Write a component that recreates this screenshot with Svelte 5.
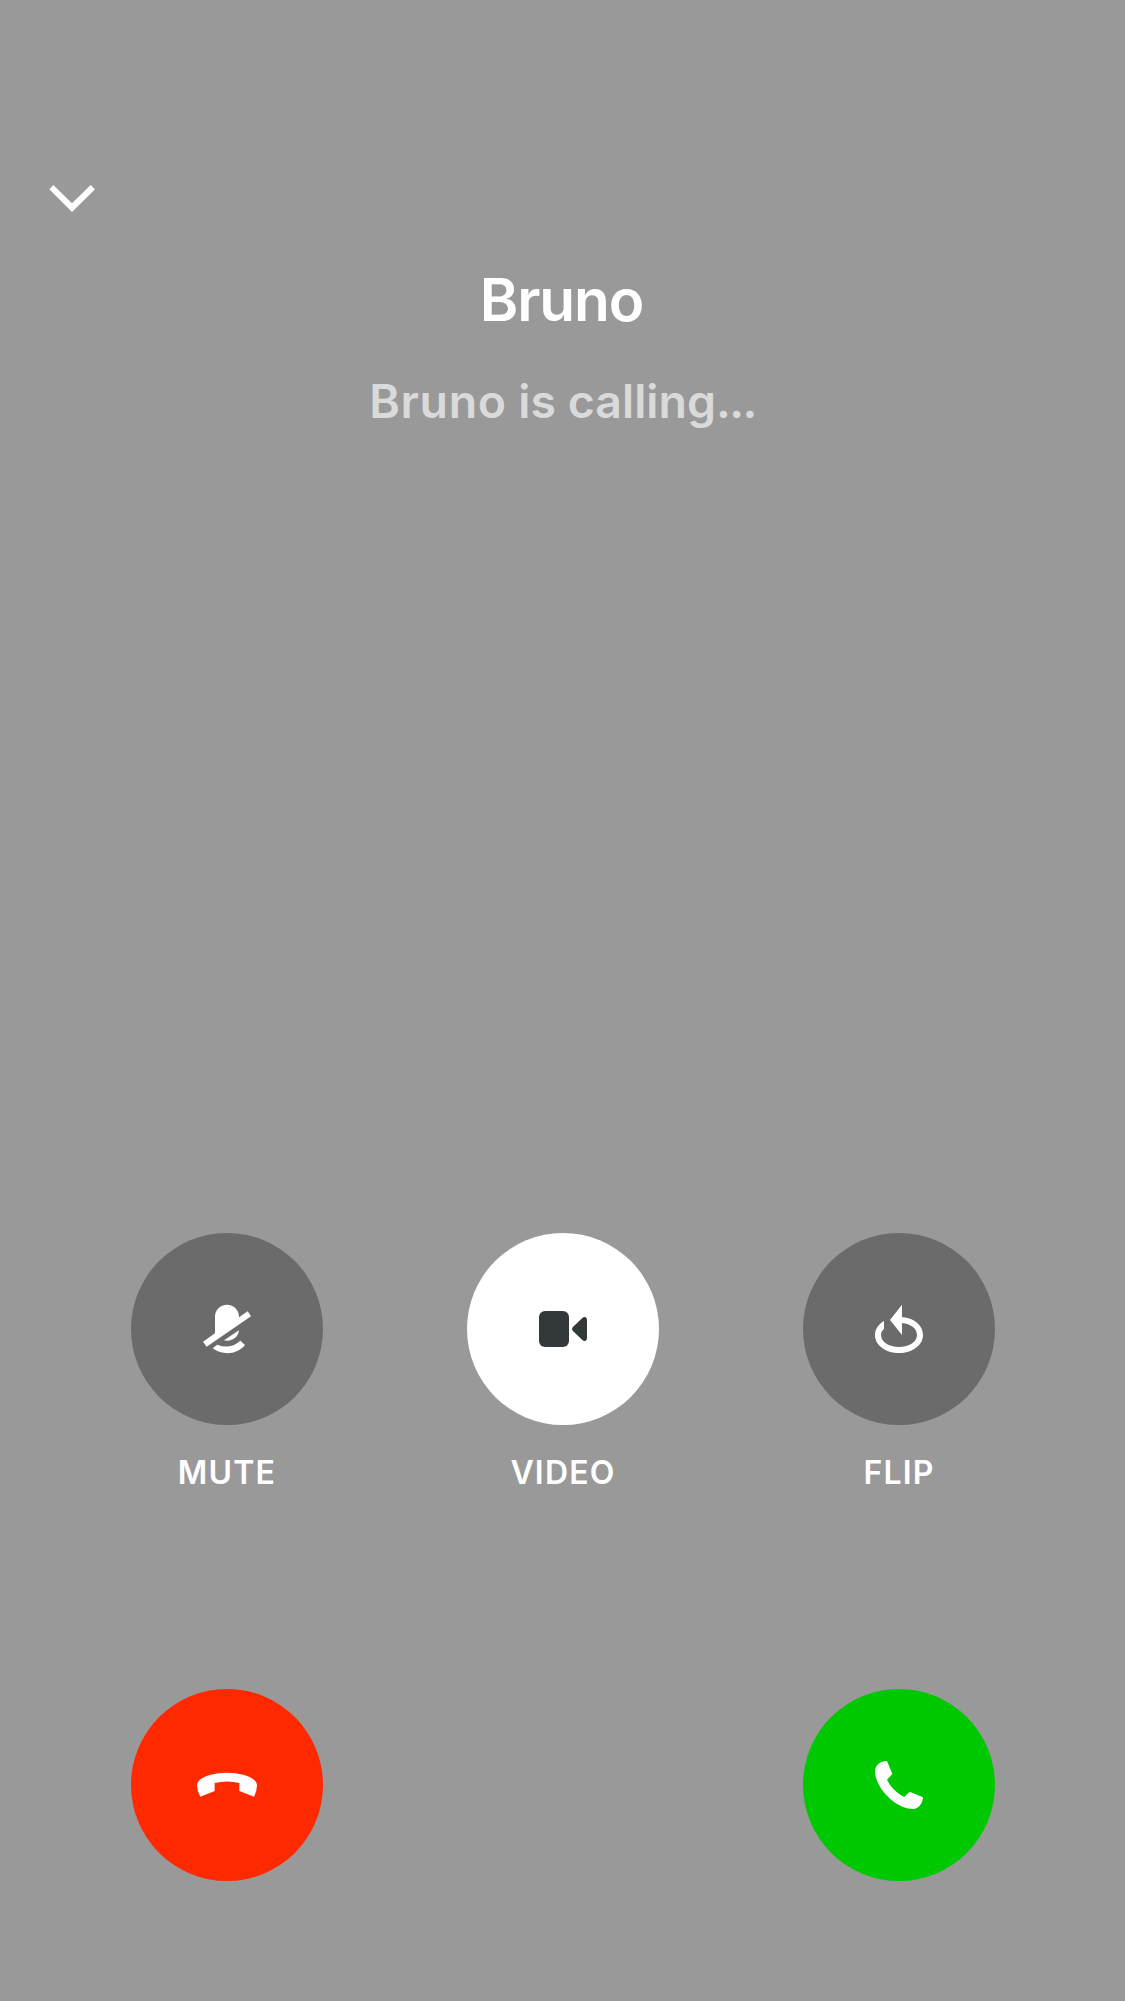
<script>
  const controls = [
    { id: 'mute', label: 'MUTE' },
    { id: 'video', label: 'VIDEO' },
    { id: 'flip', label: 'FLIP' },
  ];
</script>

<main class="call">
  <header class="bar">
    <button class="collapse" aria-label="Collapse">
      <svg viewBox="0 0 270 210"><path d="M70 75 126 130 182 75 195 88 126 156 58 88Z" /></svg>
    </button>
  </header>

  <section class="caller">
    <h1>Bruno</h1>
    <p><span class="name">Bruno</span> is calling<span class="dots">...</span></p>
  </section>

  <section class="controls">
    {#each controls as control (control.id)}
      <div class="control">
        <button class="round {control.id}" aria-label={control.label}>
          {#if control.id === 'mute'}
            <svg viewBox="0 6 222 222">
              <path d="M75 80C75 59 91 44 111 44S147 59 147 80V82L173 64 183 79 50 170 39 155 75 130Z" />
              <path d="M147 121C145 139 130 152 111 152Q107 152 102 151Z" />
              <path d="M82 164Q120 180 151 152L165 165C142 193 100 198 68 175Z" />
            </svg>
          {:else if control.id === 'video'}
            <svg viewBox="3 6 222 222">
              <rect x="42" y="63" width="90" height="108" rx="18" />
              <path d="M143 112 172 84Q177 79 182 82 186 84 186 90V144Q186 150 182 152 177 155 172 150L143 122Q139 117 143 112Z" />
            </svg>
          {:else}
            <svg viewBox="0 6 222 222">
              <path d="M120 44V81C156 84 183 106 183 135C183 166 151 189 111 189S39 166 39 135C39 118 49 103 66 93V116Q57 124 57 135C57 155 80 171 111 171S165 155 165 135C165 116 146 101 120 99V135L84 90Z" />
            </svg>
          {/if}
        </button>
        <span class="label {control.id}-label">{control.label}</span>
      </div>
    {/each}
  </section>

  <section class="actions">
    <button class="round decline" aria-label="Decline">
      <svg viewBox="15 -6 222 222">
        <path d="M46 140Q36 123 36 106C36 84 78 68 126 68S216 84 216 106Q216 123 207 140L163 123V99Q126 90 89 99V123Z" />
      </svg>
    </button>
    <button class="round accept" aria-label="Accept">
      <svg viewBox="0 3 222 222">
        <path d="M75 42 91 81 75 98C87 121 103 138 127 150L143 134 183 151C182 170 169 186 153 186C101 186 39 122 39 72C39 54 56 42 75 42Z" />
      </svg>
    </button>
  </section>
</main>

<style>
  :global(body) {
    background: #999;
  }
  .call {
    box-sizing: border-box;
    width: 1125px;
    height: 2001px;
    padding: 160px 0 120px;
    display: flex;
    flex-direction: column;
    background: #999;
    color: #fff;
    font-family: Inter, 'Liberation Sans', sans-serif;
    overflow: hidden;
  }
  button {
    padding: 0;
    border: 0;
    background: none;
    color: inherit;
  }
  svg {
    display: block;
    fill: currentColor;
  }
  .bar {
    height: 70px;
    padding-left: 30px;
  }
  .collapse svg {
    width: 90px;
    height: 70px;
  }
  .caller {
    margin-top: 35px;
    text-align: center;
  }
  h1,
  p {
    margin: 0;
    font-weight: 600;
  }
  h1 {
    padding-right: 2px;
    font-size: 58.5px;
    line-height: 70px;
    letter-spacing: -1.1px;
  }
  p {
    margin-top: 36px;
    font-size: 46.5px;
    line-height: 60px;
    color: #dadada;
  }
  .name {
    letter-spacing: 0.6px;
  }
  .dots {
    letter-spacing: -1.6px;
  }
  .controls {
    margin-top: auto;
    display: flex;
    justify-content: space-between;
    padding: 0 130px 0 131px;
  }
  .control {
    width: 192px;
    display: flex;
    flex-direction: column;
    align-items: center;
  }
  .label {
    margin-top: 28px;
    font-size: 32px;
    font-weight: 560;
    line-height: 40px;
    letter-spacing: 1.2px;
  }
  .round {
    width: 192px;
    height: 192px;
    border-radius: 50%;
    display: grid;
    place-items: center;
  }
  .round svg {
    width: 74px;
    height: 74px;
  }
  .mute,
  .flip {
    background: #6b6b6b;
  }
  .video {
    background: #fff;
    color: #33383b;
  }
  .actions {
    display: flex;
    justify-content: space-between;
    margin-top: 196px;
    padding: 0 130px 0 131px;
  }
  .decline {
    background: #ff2900;
  }
  .accept {
    background: #00c800;
  }
</style>
